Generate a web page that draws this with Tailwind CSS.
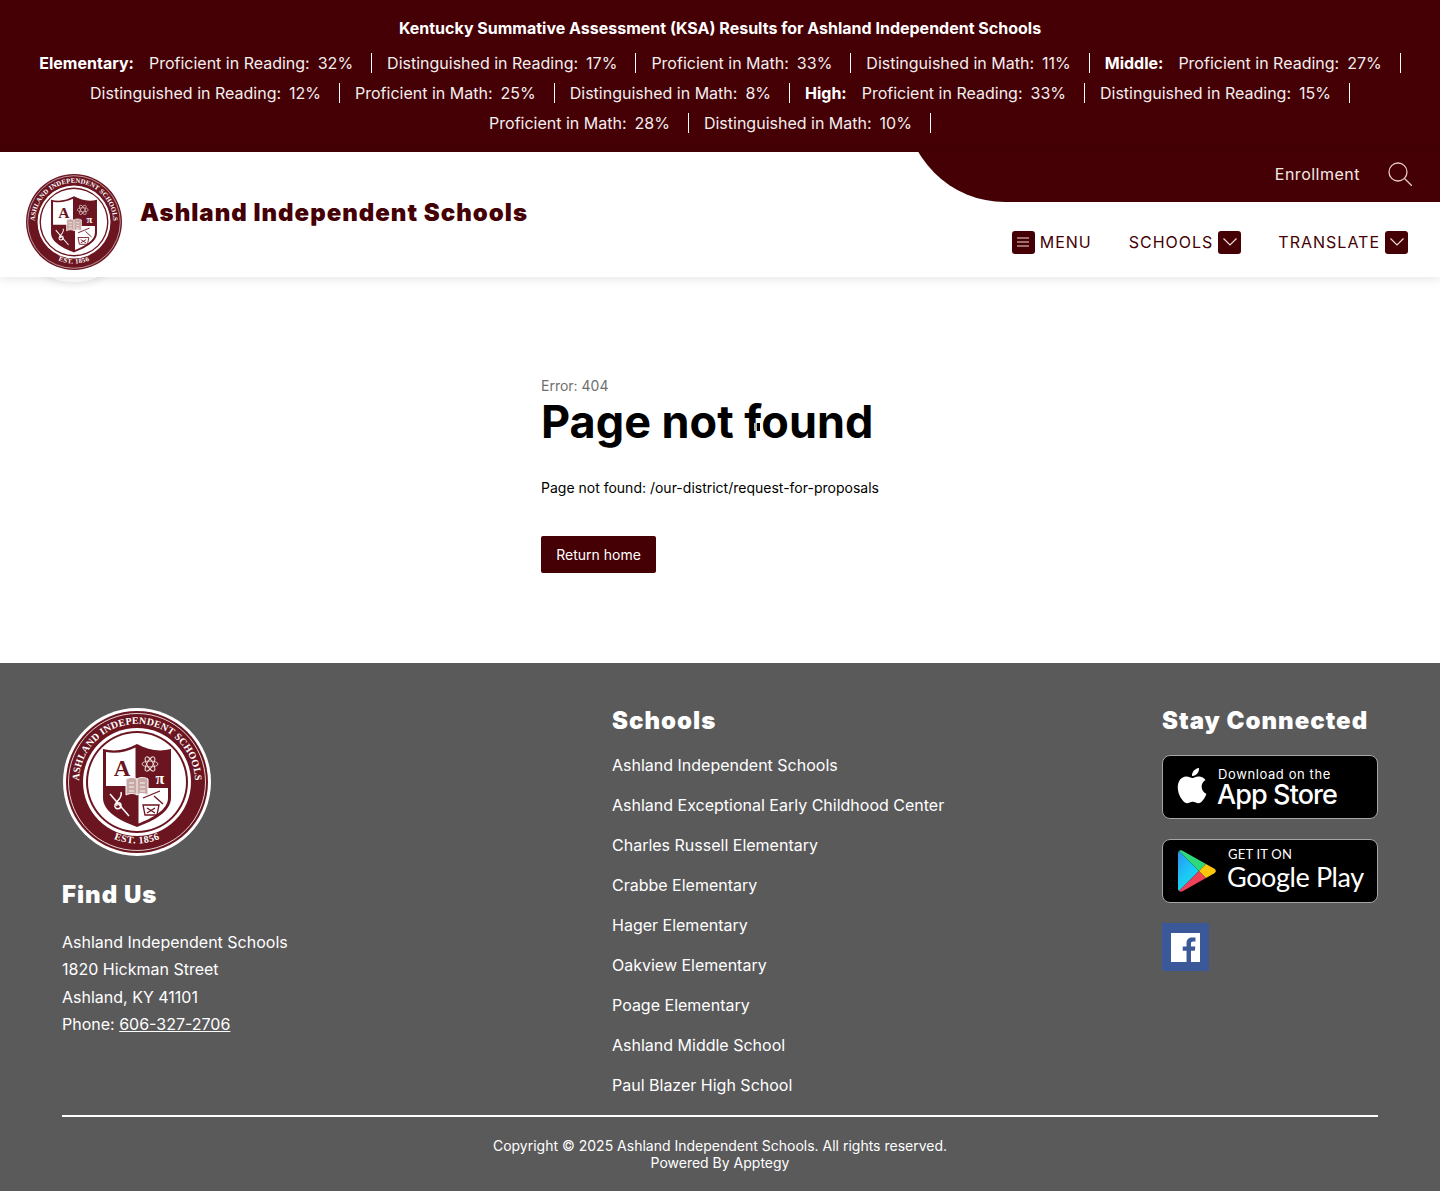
<!DOCTYPE html>
<html>
<head>
    <title>Page not found</title>
    <meta name="viewport" content="width=device-width, initial-scale=1.0">
    <script src="https://cdn.jsdelivr.net/npm/@tailwindcss/browser@4"></script>
</head>
<body class="bg-white text-black font-['Inter',sans-serif] h-[1191px] overflow-hidden">
    <!-- Crest, used in the header and the footer -->
    <svg class="hidden" aria-hidden="true">
        <symbol id="crest" viewBox="0 0 148 148">
            <circle cx="74" cy="74" r="74" fill="#fff"/>
            <circle cx="74" cy="74" r="71" fill="#6b1520"/>
            <circle cx="74" cy="74" r="68.5" fill="none" stroke="#fff" stroke-width="0.8"/>
            <circle cx="74" cy="74" r="54" fill="#fff"/>
            <circle cx="74" cy="74" r="51" fill="#6b1520"/>
            <circle cx="74" cy="74" r="49" fill="#fff"/>
            <path id="crestTop" d="M19.5 93.8 A58 58 0 1 1 128.5 93.8" fill="none"/>
            <path id="crestBottom" d="M12.5 74 A61.5 61.5 0 0 0 135.5 74" fill="none"/>
            <text font-family="'Liberation Serif',serif" font-size="10" font-weight="700" fill="#fff" letter-spacing="0.15"><textPath href="#crestTop" startOffset="50%" text-anchor="middle">ASHLAND INDEPENDENT SCHOOLS</textPath></text>
            <text font-family="'Liberation Serif',serif" font-size="10" font-weight="700" fill="#fff" letter-spacing="0.5"><textPath href="#crestBottom" startOffset="50%" text-anchor="middle">EST. 1856</textPath></text>
            <!-- shield -->
            <path d="M40 41 C52 44 63 42 74 36 C85 42 96 44 108 41 V90 C108 104 90 113 74 119 C58 113 40 104 40 90Z" fill="#6b1520"/>
            <path d="M43 44 C53 46 63 44 72.5 39.5 V78 H43Z" fill="#fff"/>
            <path d="M75.5 80 H105 V90 C105 102 89 110 75.5 115.5Z" fill="#fff"/>
            <text x="59" y="68" text-anchor="middle" font-family="'Liberation Serif',serif" font-size="23" font-weight="700" fill="#6b1520">A</text>
            <g fill="none" stroke="#e8d9d4" stroke-width="0.9">
                <ellipse cx="87" cy="56" rx="8" ry="3"/>
                <ellipse cx="87" cy="56" rx="8" ry="3" transform="rotate(60 87 56)"/>
                <ellipse cx="87" cy="56" rx="8" ry="3" transform="rotate(120 87 56)"/>
            </g>
            <text x="97" y="76" text-anchor="middle" font-family="'Liberation Serif',serif" font-size="16" font-weight="700" fill="#fff">π</text>
            <path d="M63 71 C67 69 71 69 74 71 C77 69 81 69 85 71 V87 C81 85 77 85 74 87 C71 85 67 85 63 87Z" fill="#c9a9a6" stroke="#fff" stroke-width="1"/>
            <path d="M74 71 V87 M66 75 H71 M66 79 H71 M66 83 H71 M77 75 H82 M77 79 H82 M77 83 H82" stroke="#fff" stroke-width="0.9" fill="none"/>
            <g fill="none" stroke="#fff" stroke-width="1.5">
                <path d="M47 86 L66 108"/>
                <path d="M58 84 C60 90 53 93 52 97 C51 102 58 102 58 97 C58 94 53 94 54 98"/>
            </g>
            <g fill="none" stroke="#6b1520" stroke-width="1.3">
                <path d="M80 90 L97 83 M80 97 H96 L94 107 H82Z M84 100 L92 105 M92 100 L84 105"/>
                <path d="M91 88 L100 96"/>
            </g>
        </symbol>
    </svg>

    <!-- Alert banner -->
    <div class="bg-[#440005] text-white h-[152px] pt-[18px] px-[10px] text-center">
        <p class="text-[16px] leading-[20px] font-bold">Kentucky Summative Assessment (KSA) Results for Ashland Independent Schools</p>
        <div class="flex flex-wrap justify-center gap-x-[15px] mt-[10px] text-[16px] leading-[30px] text-[#f4eeee] h-[90px]">
            <span class="font-bold text-white">Elementary:</span>
            <span class="pr-[19px] relative after:absolute after:right-0 after:top-[5px] after:h-[20px] after:w-px after:bg-white">Proficient in Reading:<span class="ml-2">32%</span></span>
            <span class="pr-[19px] relative after:absolute after:right-0 after:top-[5px] after:h-[20px] after:w-px after:bg-white">Distinguished in Reading:<span class="ml-2">17%</span></span>
            <span class="pr-[19px] relative after:absolute after:right-0 after:top-[5px] after:h-[20px] after:w-px after:bg-white">Proficient in Math:<span class="ml-2">33%</span></span>
            <span class="pr-[19px] relative after:absolute after:right-0 after:top-[5px] after:h-[20px] after:w-px after:bg-white">Distinguished in Math:<span class="ml-2">11%</span></span>
            <span class="font-bold text-white">Middle:</span>
            <span class="pr-[19px] relative after:absolute after:right-0 after:top-[5px] after:h-[20px] after:w-px after:bg-white">Proficient in Reading:<span class="ml-2">27%</span></span>
            <span class="pr-[19px] relative after:absolute after:right-0 after:top-[5px] after:h-[20px] after:w-px after:bg-white">Distinguished in Reading:<span class="ml-2">12%</span></span>
            <span class="pr-[19px] relative after:absolute after:right-0 after:top-[5px] after:h-[20px] after:w-px after:bg-white">Proficient in Math:<span class="ml-2">25%</span></span>
            <span class="pr-[19px] relative after:absolute after:right-0 after:top-[5px] after:h-[20px] after:w-px after:bg-white">Distinguished in Math:<span class="ml-2">8%</span></span>
            <span class="font-bold text-white">High:</span>
            <span class="pr-[19px] relative after:absolute after:right-0 after:top-[5px] after:h-[20px] after:w-px after:bg-white">Proficient in Reading:<span class="ml-2">33%</span></span>
            <span class="pr-[19px] relative after:absolute after:right-0 after:top-[5px] after:h-[20px] after:w-px after:bg-white">Distinguished in Reading:<span class="ml-2">15%</span></span>
            <span class="pr-[19px] relative after:absolute after:right-0 after:top-[5px] after:h-[20px] after:w-px after:bg-white">Proficient in Math:<span class="ml-2">28%</span></span>
            <span class="pr-[19px] relative after:absolute after:right-0 after:top-[5px] after:h-[20px] after:w-px after:bg-white">Distinguished in Math:<span class="ml-2">10%</span></span>
            <span class="w-[5px]"></span>
        </div>
    </div>

    <!-- Header -->
    <header class="relative bg-white h-[125px] shadow-[0_2px_10px_rgba(0,0,0,0.10)] flex justify-between">
        <div class="absolute left-[14px] top-[10px] w-[120px] h-[120px] rounded-full bg-white shadow-[0_3px_6px_rgba(0,0,0,0.08)] -z-10"></div>
        <div class="flex items-start pl-[24px] pt-[20px]">
            <svg class="w-[100px] h-[100px] relative"><use href="#crest"/></svg>
            <h1 class="ml-[16px] mt-[25px] text-[24px] leading-[32px] font-black tracking-[1px] text-[#440005]">Ashland Independent Schools</h1>
        </div>
        <div class="w-[522px] flex flex-col">
            <div class="relative h-[50px] overflow-hidden flex items-center justify-end pr-[28px]">
                <div class="absolute right-0 bottom-0 w-[535px] h-[100px] rounded-bl-[100px] bg-[#440005]"></div>
                <a href="#" class="relative text-[16px] tracking-[0.5px] text-[#f5e9e4] mb-[6px] mr-[28px]">Enrollment</a>
                <svg class="relative w-[24px] h-[24px] mb-[6px]" viewBox="0 0 24 24" fill="none" stroke="#e8c7bf" stroke-width="1.3">
                    <circle cx="10" cy="10" r="9"/>
                    <path d="M16.5 16.5 L24 24"/>
                </svg>
            </div>
            <nav class="flex-1 flex items-center justify-end pr-[32px] pt-[5px] text-[16px] tracking-[1px] text-[#440005]">
                <a href="#" class="flex items-center">
                    <span class="w-[23px] h-[23px] rounded-[3px] bg-[#440005] flex items-center justify-center mr-[5px]">
                        <svg class="w-[12px] h-[12px]" viewBox="0 0 12 12" stroke="#f3dcd6" stroke-width="1.2"><path d="M0 2 H12 M0 6 H12 M0 10 H12"/></svg>
                    </span>
                    MENU
                </a>
                <a href="#" class="flex items-center ml-[37px]">
                    SCHOOLS
                    <span class="w-[23px] h-[23px] rounded-[3px] bg-[#440005] flex items-center justify-center ml-[5px]">
                        <svg class="w-[14px] h-[8px]" viewBox="0 0 14 8" fill="none" stroke="#f3dcd6" stroke-width="1.2"><path d="M0.5 0.5 L7 7 L13.5 0.5"/></svg>
                    </span>
                </a>
                <a href="#" class="flex items-center ml-[37px]">
                    TRANSLATE
                    <span class="w-[23px] h-[23px] rounded-[3px] bg-[#440005] flex items-center justify-center ml-[5px]">
                        <svg class="w-[14px] h-[8px]" viewBox="0 0 14 8" fill="none" stroke="#f3dcd6" stroke-width="1.2"><path d="M0.5 0.5 L7 7 L13.5 0.5"/></svg>
                    </span>
                </a>
            </nav>
        </div>
    </header>

    <!-- Main Content -->
    <main class="h-[386px] pl-[541px] pt-[100px] relative">
        <p class="text-[14px] leading-[17px] text-[#6f6f6f]">Error: 404</p>
        <h2 class="relative text-[45px] leading-[52px] font-bold w-fit mt-[2px]">Page not found
            <span class="absolute left-[213px] top-[27px] w-[3px] h-[8px] bg-[#b5b5b5]"></span>
            <span class="absolute left-[216px] top-[27px] w-[3px] h-[8px] bg-black"></span>
        </h2>
        <p class="text-[14px] leading-[20px] mt-[30px]">Page not found: /our-district/request-for-proposals</p>
        <a href="#" class="mt-[38px] inline-flex items-center justify-center w-[115px] h-[37px] bg-[#440005] text-white text-[14px] rounded-[2px]">Return home</a>
    </main>

    <!-- Footer -->
    <footer class="bg-[#5a5a5b] text-white h-[528px] px-[62px] pt-[45px]">
        <div class="grid grid-cols-[550px_550px_216px] h-[407px]">
            <div>
                <svg class="w-[148px] h-[148px] block ml-px"><use href="#crest"/></svg>
                <h3 class="mt-[23px] text-[24px] leading-[32px] font-black tracking-[1px]">Find Us</h3>
                <address class="not-italic text-[16px] leading-[27.4px] mt-[18px]">
                    Ashland Independent Schools<br>
                    1820 Hickman Street<br>
                    Ashland, KY 41101<br>
                    Phone: <a href="#" class="underline">606-327-2706</a>
                </address>
            </div>
            <div>
                <h3 class="text-[24px] leading-[32px] font-black tracking-[1px] -mt-[3px]">Schools</h3>
                <ul class="text-[16px] leading-[40px] mt-[8px]">
                    <li>Ashland Independent Schools</li>
                    <li>Ashland Exceptional Early Childhood Center</li>
                    <li>Charles Russell Elementary</li>
                    <li>Crabbe Elementary</li>
                    <li>Hager Elementary</li>
                    <li>Oakview Elementary</li>
                    <li>Poage Elementary</li>
                    <li>Ashland Middle School</li>
                    <li>Paul Blazer High School</li>
                </ul>
            </div>
            <div>
                <h3 class="text-[24px] leading-[32px] font-black tracking-[1px] -mt-[3px] whitespace-nowrap">Stay Connected</h3>
                <a href="#" class="mt-[18px] flex items-center h-[64px] w-[216px] bg-black border border-[#a6a6a6] rounded-[8px] pl-[13px]">
                    <svg class="w-[34px] h-[38px] -mt-[2px]" viewBox="3 1.5 19 21.5" fill="#fff"><path d="M18.71 19.5c-.83 1.24-1.71 2.45-3.05 2.47-1.34.03-1.77-.79-3.29-.79-1.53 0-2 .77-3.27.82-1.31.05-2.3-1.32-3.14-2.53C4.25 17 2.94 12.45 4.7 9.39c.87-1.52 2.43-2.48 4.12-2.51 1.28-.02 2.5.87 3.29.87.78 0 2.26-1.07 3.81-.91.65.03 2.47.26 3.64 1.98-.09.06-2.17 1.28-2.15 3.81.03 3.02 2.65 4.03 2.68 4.04-.03.07-.42 1.44-1.38 2.83M13 3.5c.73-.83 1.94-1.46 2.94-1.5.13 1.17-.34 2.35-1.04 3.19-.69.85-1.83 1.51-2.95 1.42-.15-1.15.41-2.35 1.05-3.11z"/></svg>
                    <span class="ml-[8px] flex flex-col font-['Inter',sans-serif]">
                        <span class="text-[13px] leading-[15px] tracking-[0.6px]">Download on the</span>
                        <span class="text-[27px] leading-[25px] tracking-[-0.9px] font-medium -ml-px">App Store</span>
                    </span>
                </a>
                <a href="#" class="mt-[20px] flex items-center h-[64px] w-[216px] bg-black border border-[#a6a6a6] rounded-[8px] pl-[15px]">
                    <svg class="w-[38px] h-[42px]" viewBox="0 0 38 42">
                        <defs>
                            <linearGradient id="playBlue" x1="0" y1="0" x2="0.6" y2="1">
                                <stop offset="0" stop-color="#2b8ff0"/>
                                <stop offset="0.55" stop-color="#1cc4f5"/>
                                <stop offset="1" stop-color="#12e0e8"/>
                            </linearGradient>
                        </defs>
                        <path d="M1 1 L21 21 L1 41 C0.4 40.5 0 39.6 0 38.6 V3.4 C0 2.4 0.4 1.5 1 1Z" fill="url(#playBlue)"/>
                        <path d="M1 1 C2 0 3.6 0 5 0.9 L28 14 L21 21Z" fill="#2fd97b"/>
                        <path d="M1 41 C2 42 3.6 42 5 41.1 L28 28 L21 21Z" fill="#f0415a"/>
                        <path d="M28 14 L36 18.6 C38.4 20 38.4 22 36 23.4 L28 28 L21 21Z" fill="#fdc60d"/>
                    </svg>
                    <span class="ml-[11px] mb-[5px] flex flex-col font-['Lato',sans-serif]">
                        <span class="text-[13px] leading-[16px] tracking-[0.2px] pl-px">GET IT ON</span>
                        <span class="text-[27px] leading-[30px] tracking-[-0.4px] whitespace-nowrap">Google Play</span>
                    </span>
                </a>
                <a href="#" class="mt-[20px] flex items-center justify-center w-[47px] h-[48px] bg-[#3b5998]">
                    <svg class="w-[29px] h-[29px]" viewBox="0 0 28 28">
                        <rect width="28" height="28" fill="#fff"/>
                        <path d="M19.3 28 V17.2 H23 L23.5 13 H19.3 V10.3 C19.3 9.1 19.7 8.2 21.4 8.2 H23.6 V4.4 C23.2 4.4 21.9 4.3 20.4 4.3 C17.2 4.3 15 6.2 15 9.8 V13 H11.3 V17.2 H15 V28Z" fill="#3b5998"/>
                    </svg>
                </a>
            </div>
        </div>
        <div class="border-t-2 border-white pt-[20px] text-center text-[14px] leading-[17px]">
            <p>Copyright © 2025 Ashland Independent Schools. All rights reserved.</p>
            <p>Powered By Apptegy</p>
        </div>
    </footer>
</body>
</html>
